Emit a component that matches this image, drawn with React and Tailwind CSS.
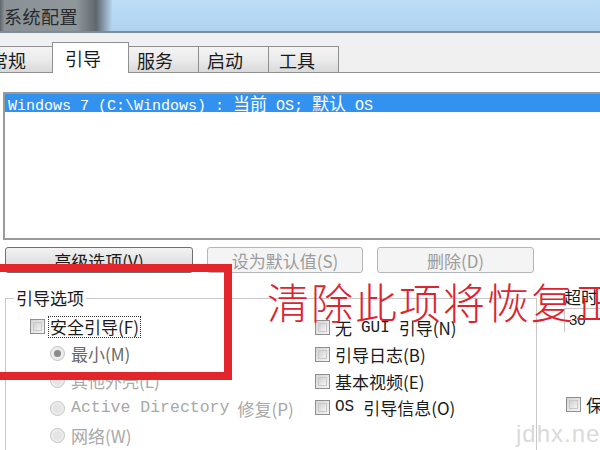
const CJK = "font-['Noto_Sans_CJK_SC',sans-serif]";
const MONO = "font-['Liberation_Mono','Noto_Sans_CJK_SC',monospace]";

function Check({ className = "" }) {
  return (
    <span className={"inline-block w-[15px] h-[15px] shrink-0 border border-[#8e8f8f] bg-[linear-gradient(135deg,#d4d4d4,#f6f6f6)] p-[2px] " + className}>
      <span className="block w-full h-full border border-[#c8c8c8] bg-[linear-gradient(135deg,#cfcfcf,#f4f4f4)]" />
    </span>
  );
}

function Radio({ on = false, className = "" }) {
  return (
    <span className={"inline-flex items-center justify-center w-[15px] h-[15px] shrink-0 rounded-full border border-[#c4c4c4] bg-[#ececec] " + className}>
      {on ? <span className="block w-[7px] h-[7px] rounded-full bg-[#8a8a8a]" /> : <span className="block w-[9px] h-[9px] rounded-full bg-[#e4e4e4]" />}
    </span>
  );
}

function Tab({ label, w, pl, selected, extra = "" }) {
  if (selected) {
    return (
      <div className={`relative z-10 h-[31px] mb-[-1px] bg-white border border-b-0 border-[#8e8f8f] flex items-center ${extra}`} style={{ width: w, paddingLeft: pl }}>
        <span className="text-[18px] leading-none">{label}</span>
      </div>
    );
  }
  return (
    <div className={`h-[26px] border border-b-0 border-l-0 border-[#8e8f8f] bg-[linear-gradient(180deg,#f4f4f4_0%,#ebebeb_50%,#d9d9d9_100%)] flex items-center ${extra}`} style={{ width: w, paddingLeft: pl }}>
      <span className="text-[18px] leading-none whitespace-nowrap">{label}</span>
    </div>
  );
}

export default function App() {
  return (
    <div className={`relative w-[600px] h-[450px] overflow-hidden bg-white text-[#1a1a1a] ${CJK}`}>
      {/* title bar */}
      <div className="h-[31px] flex bg-[linear-gradient(180deg,#bcdcf6,#b0d3f0)]">
        <div className="w-[112px] h-full flex items-center pl-[4px] bg-[linear-gradient(90deg,#5e666b_0%,#8b9297_4%,#90979b_68%,#5f686e_86%,#b3d4ef_100%)]">
          <span className="text-[18px] leading-none text-[#262a2d] tracking-[0.5px]">系统配置</span>
        </div>
      </div>
      <div className="h-[2px] bg-[#7d8b98]" />
      {/* tab strip */}
      <div className="h-[39px] bg-[#f0f0f0] flex items-end overflow-visible">
        <div className="h-[26px] w-[53px] shrink-0 border-t border-r border-[#8e8f8f] bg-[linear-gradient(180deg,#f4f4f4_0%,#ebebeb_50%,#d9d9d9_100%)] flex items-center justify-end pr-[26px] overflow-visible">
          <span className="text-[18px] leading-none whitespace-nowrap">常规</span>
        </div>
        <Tab label="引导" w={77} pl={12} selected extra="ml-[-1px]" />
        <Tab label="服务" w={70} pl={8} />
        <Tab label="启动" w={70} pl={8} />
        <Tab label="工具" w={70} pl={10} />
      </div>
      {/* content */}
      <div className="border-t border-[#8e8f8f] bg-white pt-[19px]">
        {/* listbox */}
        <div className="ml-[3px] h-[148px] border-2 border-[#9a9a9a] border-r-0">
          <div className={`h-[18px] bg-[#3392ef] text-white pl-[3px] ${MONO} text-[15px] leading-[18px] whitespace-pre`}>
            Windows 7 (C:\Windows) : <span className={`${CJK} text-[17px]`}>当前</span> OS; <span className={`${CJK} text-[17px]`}>默认</span> OS
          </div>
        </div>
        {/* buttons */}
        <div className="flex gap-[14px] ml-[5px] mt-[7px]">
          <div className="w-[188px] h-[26px] rounded-[3px] border border-[#707070] bg-[linear-gradient(180deg,#f3f3f3,#e4e4e4_50%,#d4d4d4)] flex items-center justify-center text-[17px] leading-none">高级选项(V)</div>
          <div className="w-[156px] h-[26px] rounded-[3px] border border-[#b2b6b9] bg-[#f4f4f4] flex items-center justify-center text-[17px] leading-none text-[#9c9c9c]">设为默认值(S)</div>
          <div className="w-[157px] h-[26px] rounded-[3px] border border-[#b2b6b9] bg-[#f4f4f4] flex items-center justify-center text-[17px] leading-none text-[#9c9c9c]">删除(D)</div>
        </div>
        {/* lower area */}
        <div className="flex mt-[15px]">
          {/* group box */}
          <div className="relative shrink-0 ml-[5px] w-[532px] mt-[10px] border-l border-t border-r border-[#c9c9c9] h-[200px]">
            <div className="absolute left-[8px] top-[-12px] bg-white px-[2px] text-[17px] leading-[22px]">引导选项</div>
            <div className="flex pt-[14px]">
              <div className="w-[309px] shrink-0 pl-[24px] flex flex-col">
                <div className="h-[27px] flex items-center gap-[3px]">
                  <Check />
                  <span className="text-[17px] leading-[20px] border border-dotted border-[#333] px-[1px]">安全引导(F)</span>
                </div>
                <div className="h-[27px] flex items-center gap-[6px] pl-[20px] text-[#6a6a6a]">
                  <Radio on />
                  <span className="text-[17px] leading-none">最小(M)</span>
                </div>
                <div className="h-[27px] flex items-center gap-[6px] pl-[20px] text-[#a8a8a8]">
                  <Radio />
                  <span className="text-[17px] leading-none">其他外壳(L)</span>
                </div>
                <div className="h-[28px] flex items-center gap-[6px] pl-[20px] text-[#a8a8a8] whitespace-nowrap">
                  <Radio />
                  <span className={`${MONO} text-[16.5px] leading-none`}>Active Directory</span>
                  <span className="text-[17px] leading-none ml-[2px]">修复(P)</span>
                </div>
                <div className="h-[27px] flex items-center gap-[6px] pl-[20px] text-[#a8a8a8]">
                  <Radio />
                  <span className="text-[17px] leading-none">网络(W)</span>
                </div>
              </div>
              <div className="flex flex-col pt-[1px] whitespace-nowrap">
                <div className="h-[27px] flex items-center gap-[5px]">
                  <Check />
                  <span className="text-[17px] leading-none">无</span>
                  <span className={`${MONO} text-[16px] leading-none ml-[4px]`}>GUI</span>
                  <span className="text-[17px] leading-none ml-[4px]">引导(N)</span>
                </div>
                <div className="h-[27px] flex items-center gap-[5px]">
                  <Check />
                  <span className="text-[17px] leading-none">引导日志(B)</span>
                </div>
                <div className="h-[26px] flex items-center gap-[5px]">
                  <Check />
                  <span className="text-[17px] leading-none">基本视频(E)</span>
                </div>
                <div className="h-[26px] flex items-center gap-[5px]">
                  <Check />
                  <span className={`${MONO} text-[16px] leading-none`}>OS</span>
                  <span className="text-[17px] leading-none ml-[4px]">引导信息(O)</span>
                </div>
              </div>
            </div>
          </div>
          {/* right panel */}
          <div className="ml-[27px] shrink-0 flex flex-col">
            <div className="text-[17px] leading-none whitespace-nowrap">超时</div>
            <div className="mt-[3px] w-[80px] h-[24px] border-t border-l border-[#c8c8c8] flex items-center pl-[4px] text-[15px] font-['Liberation_Sans',sans-serif]">30</div>
            <div className="mt-[64px] flex items-start gap-[5px] ml-[2px]">
              <Check className="mt-[1px]" />
              <span className="text-[17px] leading-[18px] whitespace-nowrap">保存</span>
            </div>
          </div>
        </div>
      </div>

      {/* annotation overlays */}
      <div className="absolute left-[-12px] top-[264px] w-[244px] h-[116px] border-[8px] border-[#e3262b]" />
      <div className="absolute left-[267px] top-[280px] text-[42px] leading-none tracking-[2px] text-[#dc2430] whitespace-nowrap font-light">清除此项将恢复正</div>
      <div className="absolute left-[516px] top-[422px] text-[24px] leading-none text-[#dadada] font-['Liberation_Sans',sans-serif] tracking-[1px]">jdhx.net</div>
    </div>
  );
}
